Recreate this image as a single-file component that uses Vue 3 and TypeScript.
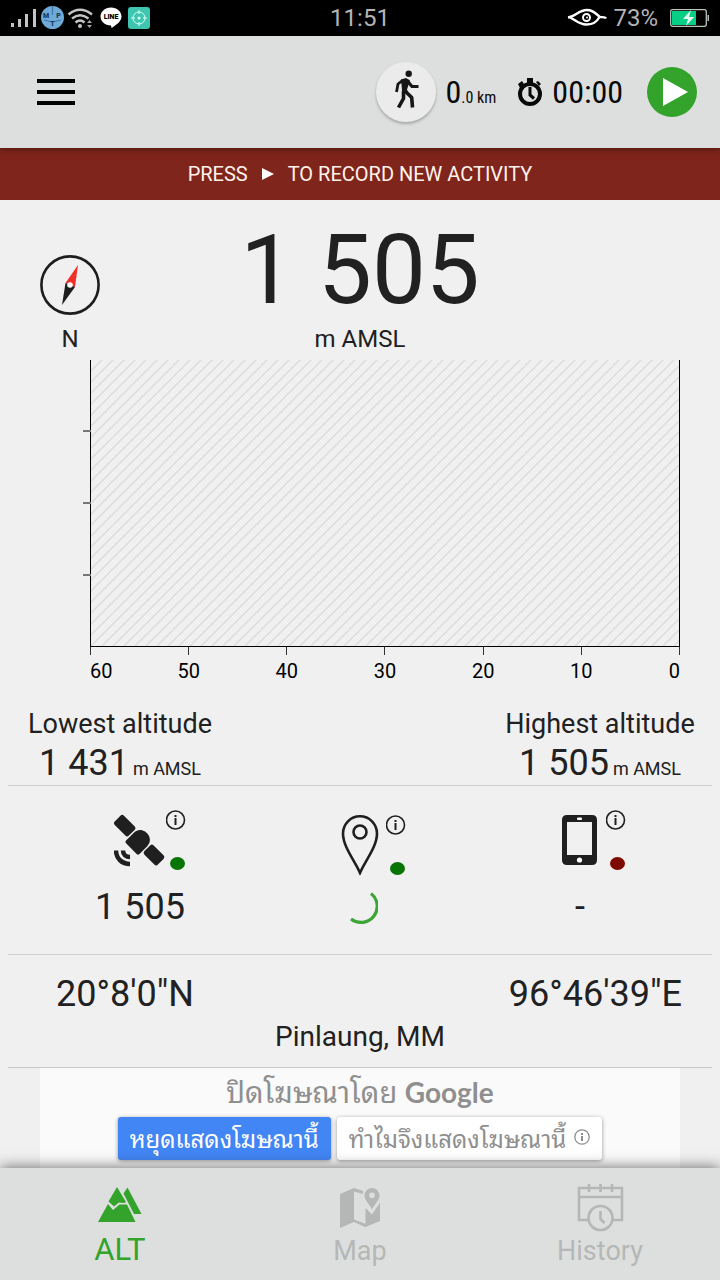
<script setup lang="ts">
interface Sensor {
  id: 'satellite' | 'pin' | 'phone'
  label: string
  value: string
  active: boolean
}

const sensors: Sensor[] = [
  { id: 'satellite', label: 'Satellite altitude', value: '1 505', active: true },
  { id: 'pin', label: 'Location altitude', value: '', active: true },
  { id: 'phone', label: 'Barometer altitude', value: '-', active: false },
]

const minutes: number[] = [60, 50, 40, 30, 20, 10, 0]
const extremes = [
  { title: 'Lowest altitude', value: '1 431' },
  { title: 'Highest altitude', value: '1 505' },
]
</script>

<template>
  <div class="screen">
    <div class="status">
      <div class="status-side">
        <svg width="140" height="24" viewBox="0 0 140 24" aria-hidden="true">
          <g fill="#c4c4c4">
            <rect x="1" y="17" width="3" height="4" />
            <rect x="8" y="13" width="3" height="8" />
            <rect x="15" y="8" width="3" height="13" />
            <rect x="23" y="3" width="3" height="18" />
          </g>
          <circle cx="42.500" cy="11.500" r="11.500" fill="#6fabd6" />
          <path d="M42.500 0v9M34 14l8.500 2 8.500-2" stroke="#3d78ab" stroke-width="1.200" fill="none" />
          <g font-family="Roboto, sans-serif" font-size="7" font-weight="900" fill="#173c62" text-anchor="middle">
            <text x="36" y="12">M</text><text x="48.500" y="12">P</text><text x="42.500" y="20">T</text>
          </g>
          <g fill="none" stroke="#c4c4c4" stroke-width="2.400">
            <path d="M58.500 8.500Q70 -1 82 8.500" />
            <path d="M62 12.500q8-6.500 16.500 0" />
            <path d="M65.500 16.500q4.500-4 9 0" />
          </g>
          <circle cx="70" cy="20" r="2" fill="#c4c4c4" />
          <path d="M77 17l2.500-3 2.500 3zM77 19l2.500 3 2.500-3z" fill="#a4a4a4" />
          <path d="M101 1.500c6 0 10.500 4 10.500 9 0 4.500-4.500 8-10 11.500l-.5-2.500c-6-.2-10.500-4-10.500-9s4.500-9 10.500-9z" fill="#fff" />
          <text x="101" y="13" font-family="Roboto, sans-serif" font-size="7" font-weight="900" text-anchor="middle" fill="#000">LINE</text>
          <rect x="118" y="1" width="22" height="22" rx="3" fill="#3fc6b0" />
          <g fill="none" stroke="#d6fff6" stroke-width="1">
            <circle cx="129" cy="12" r="6" />
            <path d="M129 4v4M129 16v4M121 12h4M133 12h4" />
          </g>
          <circle cx="129" cy="12" r="1.500" fill="#d6fff6" />
        </svg>
      </div>
      <time class="clock">11:51</time>
      <div class="status-side status-right">
        <svg width="40" height="20" viewBox="0 0 40 20" aria-hidden="true">
          <path d="M1 9.500C8 8.500 12 2 20 2c7 0 10 5 13 7 2.500.5 5-.5 6 1.500M3 9.500C9 12 12 17 20 16.500c6 0 10-3 12.500-7.500" fill="none" stroke="#fff" stroke-width="2.400" />
          <circle cx="19.500" cy="9.500" r="3.500" fill="none" stroke="#fff" stroke-width="2" />
          <circle cx="20" cy="9.500" r="1" fill="#fff" />
        </svg>
        <span>73%</span>
        <svg class="battery" width="40" height="20" viewBox="0 0 40 20" aria-hidden="true">
          <rect x=".7" y="1.700" width="35.600" height="16.600" rx="2" fill="none" stroke="#b8c4bc" stroke-width="1.300" />
          <rect x="2" y="3" width="24" height="14" fill="#05cf83" />
          <path d="M37.500 7h1.500v6h-1.500z" fill="#b8b8b8" />
          <path d="M21 2l-8 9h5l-2 7 8-9h-5z" fill="#e8fff4" />
        </svg>
      </div>
    </div>

    <header class="header">
      <button class="menu" type="button" aria-label="Menu"><i></i><i></i><i></i></button>
      <div class="tracker">
        <button class="mode" type="button" aria-label="Walking">
          <svg width="50" height="50" viewBox="0 0 50 50" aria-hidden="true">
            <circle cx="27.700" cy="6.800" r="3.200" fill="#161616" />
            <path d="M20 12.500l5-1.500 4 2.500-3 9 1 3-6 1.500 0-4z" fill="#161616" />
            <g fill="none" stroke="#161616" stroke-width="3.200" stroke-linejoin="round">
              <path d="M26 13.500l5 6h6.500" />
              <path d="M22 13l-5 4-1.500 8" stroke-width="2.800" />
              <path d="M22.500 24v7.500L17.500 40.500" stroke-width="3.600" />
              <path d="M24 24l6.700 6.500.8 10" stroke-width="3.600" />
            </g>
          </svg>
        </button>
        <p class="distance">0<small>.0 km</small></p>
        <p class="duration">
          <svg width="26" height="30" viewBox="0 0 26 30" aria-hidden="true">
            <circle cx="13" cy="17" r="10" fill="none" stroke="#080808" stroke-width="4" />
            <path d="M13 10v8l4 3.500" fill="none" stroke="#080808" stroke-width="3" />
            <path d="M10 1h6v5h-6zM1 7l4-3 2 3-4 4zM19 5l2-1 3 3-2 2z" fill="#080808" />
          </svg>
          <time>00:00</time>
        </p>
        <button class="play" type="button" aria-label="Start recording">
          <svg width="50" height="50" viewBox="0 0 50 50" aria-hidden="true"><path d="M16 11v28l25-14z" fill="#fff" /></svg>
        </button>
      </div>
    </header>

    <div class="banner">
      <span>PRESS</span>
      <svg width="12" height="12" viewBox="0 0 12 12" aria-hidden="true"><path d="M0 0v12l12-6z" fill="#fff" /></svg>
      <span>TO RECORD NEW ACTIVITY</span>
    </div>

    <main class="main">
      <section class="hero">
        <div class="compass">
          <svg width="60" height="60" viewBox="0 0 60 60" aria-hidden="true">
            <circle cx="30" cy="30" r="28.600" fill="none" stroke="#1d1d1d" stroke-width="2.600" />
            <path d="M38 10l-12.500 18 9.500 4z" fill="#f03028" />
            <path d="M22 50l3.500-22 9.500 4z" fill="#1d1d1d" />
            <circle cx="30" cy="30" r="2.800" fill="#fff" />
          </svg>
          <span>N</span>
        </div>
        <div class="altitude">
          <strong>1 505</strong>
          <span>m AMSL</span>
        </div>
      </section>

      <section class="chart" aria-label="Altitude over the last 60 minutes">
        <div class="plot">
          <svg class="hatch" width="100%" height="100%" aria-hidden="true">
            <defs>
              <pattern id="hatch" width="11" height="11" patternUnits="userSpaceOnUse">
                <path d="M-2 13L13 -2M-2 2L2 -2M9 13l4-4" stroke="#dcdcdc" stroke-width="1.500" />
              </pattern>
            </defs>
            <rect width="100%" height="100%" fill="url(#hatch)" />
          </svg>
          <div class="y-ticks"><i v-for="n in 3" :key="n"></i></div>
        </div>
        <ol class="x-axis">
          <li v-for="m in minutes" :key="m"><span>{{ m }}</span></li>
        </ol>
      </section>

      <section class="extremes">
        <div v-for="e in extremes" :key="e.title" class="extreme">
          <h2>{{ e.title }}</h2>
          <p>{{ e.value }}<small>m AMSL</small></p>
        </div>
      </section>

      <section class="sensors">
        <div v-for="s in sensors" :key="s.id" class="sensor">
          <div class="sensor-head" :class="s.id">
            <svg v-if="s.id === 'satellite'" class="glyph" width="52" height="54" viewBox="0 0 52 54" aria-hidden="true" fill="#1f1f1f">
              <g transform="translate(25.500 27.500) rotate(45)">
                <rect x="-31" y="-6.500" width="20" height="13" rx="2.500" />
                <rect x="11" y="-6.500" width="19" height="13" rx="2.500" />
                <path d="M-9.500 9.500v-11c0-12 19-12 19 0v11q0 2-2 2h-15q-2 0-2-2z" />
              </g>
              <g fill="none" stroke="#1f1f1f" stroke-width="4.500">
                <path d="M2 37.500c0 8 6 13.500 14 13.500" />
                <path d="M9 37.500c0 4 3 6.500 7 6.500" />
              </g>
            </svg>
            <svg v-else-if="s.id === 'pin'" class="glyph" width="52" height="60" viewBox="0 0 52 60" aria-hidden="true" fill="none" stroke="#1f1f1f" stroke-width="2.600">
              <path d="M26 58C21 46 9 32 9 18.500a17 17.200 0 0 1 34 0C43 32 31 46 26 58z" />
              <circle cx="26" cy="17" r="6.500" />
            </svg>
            <svg v-else class="glyph" width="52" height="52" viewBox="0 0 52 52" aria-hidden="true">
              <path fill="#1f1f1f" fill-rule="evenodd" d="M13 1h25q5 0 5 5v40q0 5-5 5H13q-5 0-5-5V6q0-5 5-5zm0 7v33h25V8z" />
              <rect x="23" y="3.500" width="5" height="2.500" rx="1" fill="#fff" />
              <circle cx="25.500" cy="46" r="2.600" fill="#fff" />
            </svg>
            <div class="badges">
              <button class="info" type="button" :aria-label="s.label">
                <svg width="20" height="20" viewBox="0 0 20 20" aria-hidden="true">
                  <circle cx="9.500" cy="10" r="9" fill="none" stroke="#1f1f1f" stroke-width="1.600" />
                  <path d="M8.500 8h2v7h-2zM8.500 5h2v2h-2z" fill="#1f1f1f" />
                </svg>
              </button>
              <i class="dot" :class="{ on: s.active }"></i>
            </div>
          </div>
          <p v-if="s.value" class="reading">{{ s.value }}</p>
          <p v-else class="reading" aria-label="Loading">
            <svg width="36" height="36" viewBox="0 0 36 36" aria-hidden="true">
              <path d="M29 4.500A15.500 15.500 0 0 1 9 30" fill="none" stroke="#3ba536" stroke-width="3.200" />
            </svg>
          </p>
        </div>
      </section>

      <section class="position">
        <div class="coords"><span>20°8'0"N</span><span>96°46'39"E</span></div>
        <p>Pinlaung, MM</p>
      </section>

      <aside class="ad">
        <p class="ad-title">ปิดโฆษณาโดย <b>Google</b></p>
        <div class="ad-actions">
          <button class="ad-stop" type="button">หยุดแสดงโฆษณานี้</button>
          <button class="ad-why" type="button">
            ทำไมจึงแสดงโฆษณานี้
            <svg width="16" height="16" viewBox="0 0 16 16" aria-hidden="true">
              <circle cx="8" cy="8" r="7.200" fill="none" stroke="#8c8c8c" stroke-width="1.300" />
              <path d="M7 7h2v5H7zM7 4h2v2H7z" fill="#8c8c8c" />
            </svg>
          </button>
        </div>
      </aside>
    </main>

    <nav class="tabs">
      <a class="tab active" href="#alt">
        <svg width="48" height="50" viewBox="0 0 48 50" aria-hidden="true" fill="#34a32c">
          <path d="M21 5l-8.500 14.500 5.500 5L23 20.500l5 .5 2-1z" />
          <path d="M31.500 5.500L45.500 32h-7.500L27.500 11.500z" />
          <path d="M2 40l10-18 5 6 6.500-5.500h7.500L39.500 40z" />
        </svg>
        <span>ALT</span>
      </a>
      <a class="tab" href="#map">
        <svg width="48" height="50" viewBox="0 0 48 50" aria-hidden="true" fill="#b5b7b6">
          <path d="M4 12l14-6 9 3v3l-9-2.500v28L30 42v3.500L18 40 4 46z" />
          <path d="M36 6a7.500 7.500 0 0 1 7.500 7.500c0 5-5 8.500-7.500 14-2.500-5.500-7.500-9-7.500-14A7.500 7.500 0 0 1 36 6zm0 4.500a2.800 2.800 0 1 0 0 5.600 2.800 2.800 0 0 0 0-5.600z" fill-rule="evenodd" />
          <path d="M29.500 26l6.500 6.500 8-12V39l-14.500 6z" />
        </svg>
        <span>Map</span>
      </a>
      <a class="tab" href="#history">
        <svg width="48" height="50" viewBox="0 0 48 50" aria-hidden="true" fill="none" stroke="#b5b7b6" stroke-width="2.600">
          <path d="M12 38H3V6h43v32h-9M3 15h43M13 2v8M24.500 2v8M36 2v8" />
          <circle cx="24.500" cy="36" r="12" />
          <path d="M24.500 29v8l4 4" />
        </svg>
        <span>History</span>
      </a>
    </nav>
  </div>
</template>

<style>
body {
  background: #f0f0f0;
}
</style>

<style scoped>
* {
  box-sizing: border-box;
}
.screen {
  display: flex;
  flex-direction: column;
  min-height: 100vh;
  background: #f0f0f0;
  color: #212121;
  font-family: Roboto, "Noto Sans", sans-serif;
}
p,
h2,
ol {
  margin: 0;
  padding: 0;
  font-weight: 400;
}
svg {
  display: block;
  flex: none;
}
button {
  display: flex;
  align-items: center;
  justify-content: center;
  border: 0;
  padding: 0;
  background: none;
  font: inherit;
  color: inherit;
}

.status {
  display: grid;
  grid-template-columns: 1fr auto 1fr;
  align-items: center;
  height: 36px;
  padding: 0 10px;
  background: #000;
  color: #b4b4b4;
  font-size: 24px;
}
.status-side {
  display: flex;
  align-items: center;
}
.status-right {
  justify-content: flex-end;
  gap: 6px;
}
.battery {
  margin-left: 6px;
}

.header {
  position: relative;
  z-index: 1;
  display: flex;
  align-items: center;
  justify-content: space-between;
  height: 112px;
  padding: 0 23px 0 37px;
  background: #dddfde;
  box-shadow: 0 0 8px rgba(0, 0, 0, 0.5);
}
.menu {
  flex-direction: column;
  gap: 7px;
}
.menu i {
  width: 38px;
  height: 4px;
  background: #000;
}
.tracker {
  display: flex;
  align-items: center;
  color: #080808;
  font-family: "Roboto Condensed", "Liberation Sans Narrow", Roboto, sans-serif;
  font-size: 32px;
}
.mode {
  width: 60px;
  height: 60px;
  border-radius: 50%;
  background: #eaebea;
  box-shadow: 0 2px 3px rgba(0, 0, 0, 0.25);
}
.distance {
  margin-left: 10px;
}
.distance small {
  font-size: 16px;
}
.duration {
  display: flex;
  align-items: center;
  gap: 9px;
  margin: 0 24px 0 21px;
}
.play {
  width: 50px;
  height: 50px;
  border-radius: 50%;
  background: #34a32c;
}

.banner {
  display: flex;
  align-items: center;
  justify-content: center;
  gap: 14px;
  height: 52px;
  background: #7f251b;
  color: #fff3ec;
  font-size: 20px;
}

.main {
  flex: 1;
}
.hero {
  display: grid;
  grid-template-columns: 140px 1fr 140px;
  height: 160px;
}
.compass {
  display: flex;
  flex-direction: column;
  align-items: center;
  padding-top: 55px;
  font-size: 24px;
  line-height: 28px;
}
.compass span {
  margin-top: 10px;
}
.altitude {
  display: flex;
  flex-direction: column;
  align-items: center;
  padding-top: 15px;
  font-size: 24px;
  line-height: 28px;
}
.altitude strong {
  font-size: 96px;
  font-weight: 400;
  line-height: 110px;
}

.chart {
  padding: 0 40px 0 90px;
}
.plot {
  position: relative;
  height: 287px;
  border: 1px solid #000;
  border-top: 0;
}
.y-ticks {
  position: absolute;
  top: 0;
  bottom: 0;
  right: 100%;
  display: flex;
  flex-direction: column;
  justify-content: space-evenly;
}
.y-ticks i {
  width: 8px;
  height: 2px;
  background: #777;
}
.x-axis {
  display: flex;
  justify-content: space-between;
  height: 58px;
  list-style: none;
  color: #000;
  font-size: 20px;
  line-height: 24px;
}
.x-axis li {
  display: flex;
  flex-direction: column;
  align-items: center;
  width: 1px;
}
.x-axis li::before {
  content: "";
  flex: none;
  width: 1px;
  height: 8px;
  margin-bottom: 4px;
  background: #333;
}
.x-axis li:first-child {
  align-items: flex-start;
}
.x-axis li:last-child {
  align-items: flex-end;
}

.extremes {
  display: flex;
  justify-content: space-between;
  height: 81px;
  margin: 0 8px;
  border-bottom: 1px solid #d0d0d0;
}
.extreme {
  width: 224px;
  text-align: center;
  white-space: nowrap;
}
.extreme h2 {
  font-size: 27px;
  line-height: 38px;
}
.extreme p {
  font-size: 36px;
  line-height: 40px;
}
.extreme small {
  margin-left: 4px;
  font-size: 18px;
}

.sensors {
  display: grid;
  grid-template-columns: repeat(3, 1fr);
  height: 169px;
  margin: 0 8px;
  padding: 19px 22px 0;
  border-bottom: 1px solid #d0d0d0;
}
.sensor-head {
  display: grid;
  grid-template-columns: 1fr 52px 1fr;
  align-items: center;
  height: 70px;
}
.sensor-head.pin {
  align-items: end;
}
.glyph {
  grid-column: 2;
}
.badges {
  display: flex;
  flex-direction: column;
  justify-content: space-between;
  height: 60px;
}
.info {
  width: 20px;
  height: 20px;
}
.dot {
  width: 15px;
  height: 13px;
  margin-left: 4px;
  border-radius: 50%;
  background: #7d0a00;
}
.dot.on {
  background: #067506;
}
.reading {
  display: flex;
  align-items: center;
  justify-content: center;
  height: 42px;
  margin-top: 11px;
  font-size: 36px;
}

.position {
  height: 113px;
  margin: 0 8px;
  padding-top: 18px;
  border-bottom: 1px solid #c8c8c8;
  text-align: center;
}
.position p {
  font-size: 28px;
  line-height: 44px;
}
.coords {
  display: flex;
  justify-content: space-between;
  padding: 0 30px 0 48px;
  font-size: 36px;
  line-height: 42px;
}

.ad {
  height: 100px;
  margin: 0 40px;
  background: #fafafa;
  color: #8f8f8f;
  font-family: "Noto Sans Thai Looped", "Noto Looped Thai", "Droid Sans Thai", Loma, Garuda, Umpush, Waree, Roboto, "Noto Sans", sans-serif;
  text-align: center;
}
.ad-title {
  height: 49px;
  font-size: 29px;
  line-height: 44px;
  white-space: nowrap;
}
.ad-title b {
  font-family: Lato, sans-serif;
  font-size: 28px;
  font-weight: 700;
}
.ad-actions {
  display: flex;
  justify-content: center;
  gap: 6px;
  font-size: 24px;
}
.ad-actions button {
  height: 43px;
  padding: 0 12px 4px;
  gap: 8px;
  border-radius: 3px;
  white-space: nowrap;
  box-shadow: 0 1px 4px rgba(0, 0, 0, 0.4);
}
.ad-actions .ad-stop {
  background: #4285f4;
  color: #fff;
}
.ad-actions .ad-why {
  background: #fff;
}

.tabs {
  position: relative;
  display: grid;
  grid-template-columns: repeat(3, 1fr);
  height: 112px;
  background: #dddfde;
  box-shadow: 0 0 14px rgba(0, 0, 0, 0.6);
}
.tab {
  display: flex;
  flex-direction: column;
  align-items: center;
  padding-top: 14px;
  color: #b5b7b6;
  font-size: 27px;
  line-height: 38px;
  text-decoration: none;
}
.tab.active {
  color: #34a32c;
  font-size: 31px;
  line-height: 36px;
}
</style>
